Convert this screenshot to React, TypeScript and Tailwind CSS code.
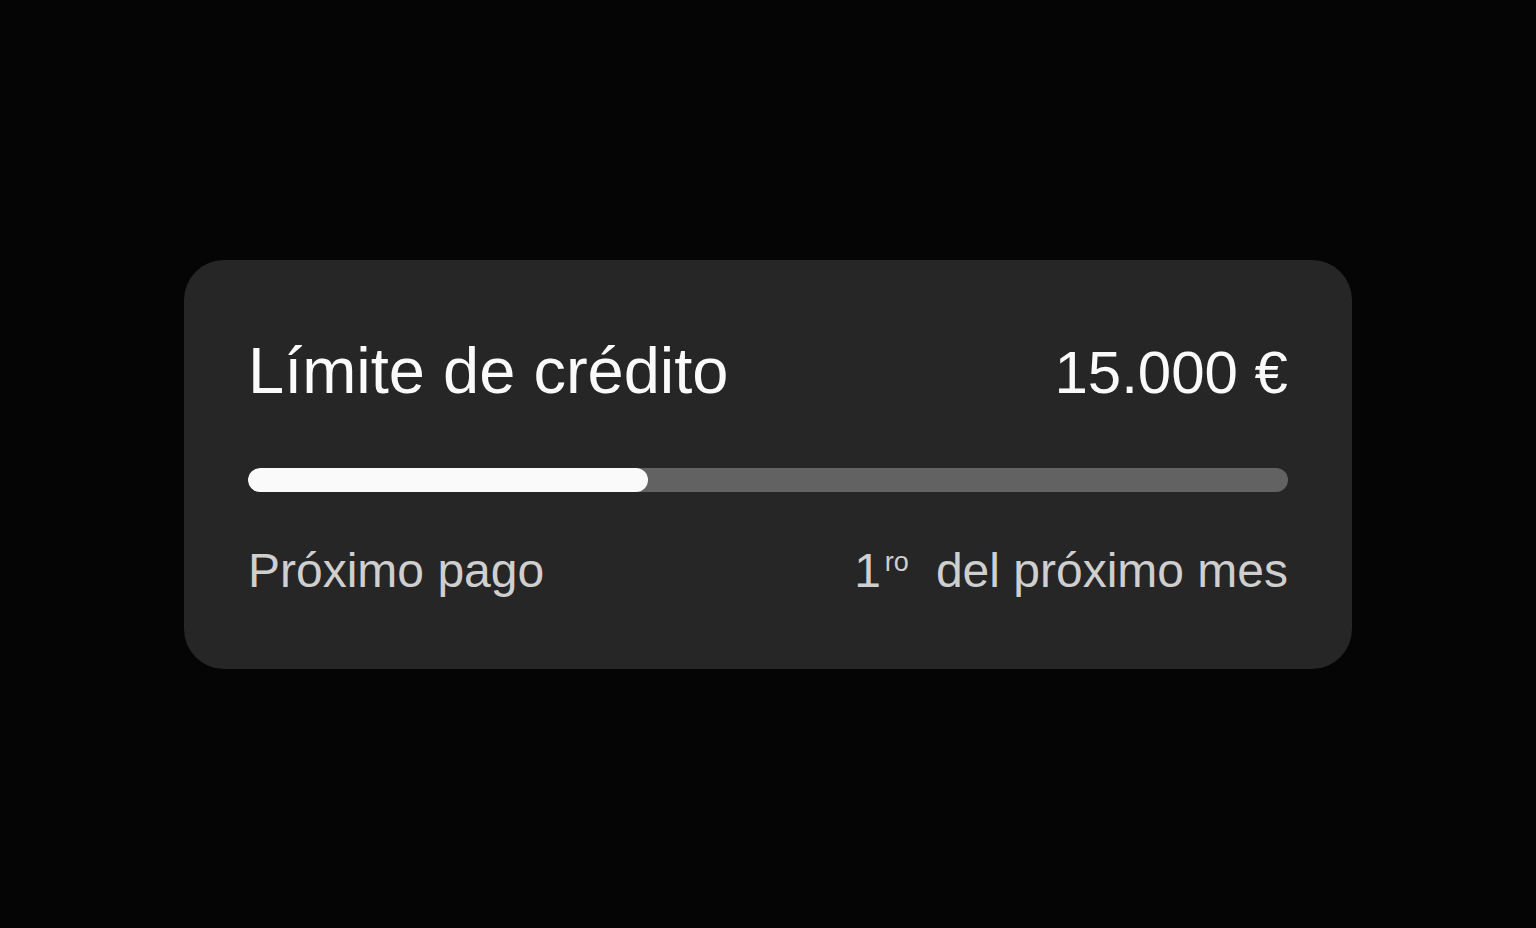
import React from 'react';

const font = { fontFamily: '"Liberation Sans", Arial, sans-serif' };

export default function App() {
  const used = 38.5;

  return (
    <div className="min-h-screen w-full bg-[#050505] flex items-center justify-center" style={font}>
      <div className="w-[1168px] rounded-[40px] bg-[#262626] px-16 pt-[78px] pb-[74px]">
        <div className="flex items-baseline justify-between">
          <h2 className="text-[65px] leading-none text-[#fafafa] font-normal">Límite de crédito</h2>
          <span className="text-[60px] leading-none text-[#fafafa]">15.000 €</span>
        </div>

        <div className="mt-[65px] h-6 w-full rounded-full bg-[#626262] overflow-hidden">
          <div className="h-full rounded-full bg-[#fafafa]" style={{ width: `${used}%` }} />
        </div>

        <div className="mt-[55px] flex items-baseline justify-between text-[48px] leading-none text-[#cfcfcf]">
          <span>Próximo pago</span>
          <span className="flex items-baseline">
            <span>1</span>
            <span className="relative -top-[16px] ml-[4px] text-[27px] leading-none">ro</span>
            <span className="ml-[27px]">del próximo mes</span>
          </span>
        </div>
      </div>
    </div>
  );
}
